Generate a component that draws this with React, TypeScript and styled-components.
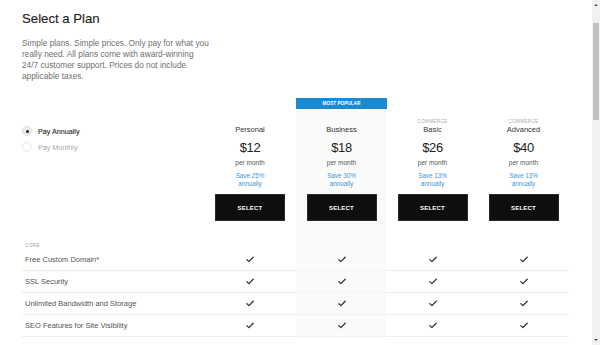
import React from "react";
import styled, { createGlobalStyle } from "styled-components";

const GlobalStyle = createGlobalStyle`
  html, body { margin: 0; padding: 0; background: #fff; overflow: hidden; }
  body { font-family: "Liberation Sans", Arial, sans-serif; -webkit-font-smoothing: antialiased; }
  * { box-sizing: border-box; }
`;

const COLUMNS = "182px 92px 91px 91px 91px";
const HIGHLIGHT = "#fafafa";

const Shell = styled.div`
  display: flex;
  width: 600px;
  height: 345px;
  overflow: hidden;
`;

const Page = styled.main`
  flex: 1;
  padding: 11px 0 0 22px;
  overflow: hidden;
`;

const Title = styled.h1`
  margin: 0;
  font-size: 13.2px;
  line-height: 16px;
  font-weight: 400;
  color: #1e1e1e;
  -webkit-text-stroke: 0.15px #1e1e1e;
`;

const Description = styled.p`
  margin: 11px 0 0;
  font-size: 8.3px;
  line-height: 11px;
  color: #707070;
`;

const Row = styled.div<{ $height?: number }>`
  display: grid;
  grid-template-columns: ${COLUMNS};
  height: ${(p) => (p.$height ? `${p.$height}px` : "auto")};
`;

const BannerRow = styled(Row)`
  margin-top: 16px;
  height: 11px;
`;

const Banner = styled.div`
  grid-column: 3;
  background: #1b8ad3;
  color: #fff;
  font-size: 4.7px;
  font-weight: 700;
  display: flex;
  align-items: center;
  justify-content: center;
`;

const Cell = styled.div<{ $highlight?: boolean; $line?: boolean }>`
  background: ${(p) => (p.$highlight ? HIGHLIGHT : "transparent")};
  border-bottom: ${(p) =>
    p.$line ? `1px solid ${p.$highlight ? "#f2f2f2" : "#eeeeee"}` : "none"};
  display: flex;
  align-items: center;
  justify-content: center;
`;

const RadioGroup = styled.div`
  padding-top: 14px;
  display: flex;
  flex-direction: column;
`;

const RadioOption = styled.label<{ $checked?: boolean }>`
  display: flex;
  align-items: center;
  height: 16px;
  gap: 6px;
  font-size: 7.2px;
  color: ${(p) => (p.$checked ? "#2a2a2a" : "#aaa")};
  -webkit-text-stroke: ${(p) => (p.$checked ? "0.12px #2a2a2a" : "0")};
`;

const RadioDot = styled.span<{ $checked?: boolean }>`
  width: 10px;
  height: 10px;
  border-radius: 50%;
  display: flex;
  align-items: center;
  justify-content: center;
  background: ${(p) => (p.$checked ? "#ebebeb" : "#fff")};
  border: 1px solid ${(p) => (p.$checked ? "#e2e2e2" : "#e8e8e8")};
  &::after {
    content: "";
    width: 3px;
    height: 3px;
    border-radius: 50%;
    background: ${(p) => (p.$checked ? "#222" : "transparent")};
  }
`;

const PlanCell = styled.div<{ $highlight?: boolean }>`
  background: ${(p) => (p.$highlight ? HIGHLIGHT : "transparent")};
  display: flex;
  flex-direction: column;
  align-items: center;
  padding: 9px 0 20px;
  text-align: center;
`;

const Tag = styled.div`
  height: 7px;
  line-height: 7px;
  font-size: 4.5px;
  letter-spacing: 0.4px;
  color: #aaa;
`;

const PlanName = styled.div`
  font-size: 7.5px;
  line-height: 9px;
  color: #333;
`;

const Price = styled.div`
  margin-top: 6px;
  font-size: 13px;
  line-height: 16px;
  letter-spacing: -0.4px;
  color: #222;
`;

const Per = styled.div`
  margin-top: 3px;
  font-size: 6.5px;
  line-height: 8px;
  color: #555;
`;

const Save = styled.div`
  margin-top: 5px;
  font-size: 6.3px;
  line-height: 8px;
  color: #3b99d8;
`;

const SelectButton = styled.button`
  margin-top: 6px;
  width: 70px;
  height: 27px;
  border: 1px solid #2a2a2a;
  background: #0e0e0e;
  color: #ffffff;
  font-family: inherit;
  font-size: 6px;
  font-weight: 700;
  letter-spacing: 0.2px;
  padding: 0;
  cursor: pointer;
`;

const SectionLabel = styled.div`
  padding-left: 3px;
  font-size: 4.5px;
  letter-spacing: 0.4px;
  color: #999;
  display: flex;
  align-items: center;
`;

const FeatureLabel = styled(Cell)`
  justify-content: flex-start;
  padding-left: 3px;
  font-size: 7.5px;
  color: #555;
`;

const Scrollbar = styled.div`
  width: 8px;
  height: 345px;
  background: #f1f1f1;
  display: flex;
  flex-direction: column;
  align-items: center;
`;

const Arrow = styled.div<{ $down?: boolean }>`
  height: 10px;
  display: flex;
  align-items: center;
  justify-content: center;
  &::after {
    content: "";
    border-left: 2.5px solid transparent;
    border-right: 2.5px solid transparent;
    ${(p) =>
      p.$down
        ? "border-top: 2.5px solid #505050;"
        : "border-bottom: 2.5px solid #505050;"}
  }
`;

const Thumb = styled.div`
  margin-top: 13px;
  width: 6px;
  height: 97px;
  background: #c1c1c1;
`;

const Spacer = styled.div`
  flex: 1;
`;

const Check = () => (
  <svg width="8" height="7" viewBox="0 0 8 7" fill="none">
    <polyline
      points="0.8,3.6 2.9,5.6 7.2,1.2"
      stroke="#333"
      strokeWidth="1.3"
      strokeLinecap="round"
      strokeLinejoin="round"
    />
  </svg>
);

const plans = [
  { tag: "", name: "Personal", price: "$12", save: "Save 25%" },
  { tag: "", name: "Business", price: "$18", save: "Save 30%", popular: true },
  { tag: "COMMERCE", name: "Basic", price: "$26", save: "Save 13%" },
  { tag: "COMMERCE", name: "Advanced", price: "$40", save: "Save 13%" },
];

const features = [
  "Free Custom Domain*",
  "SSL Security",
  "Unlimited Bandwidth and Storage",
  "SEO Features for Site Visibility",
];

export default function App() {
  return (
    <>
      <GlobalStyle />
      <Shell>
        <Page>
          <Title>Select a Plan</Title>
          <Description>
            Simple plans. Simple prices. Only pay for what you
            <br />
            really need. All plans come with award-winning
            <br />
            24/7 customer support. Prices do not include
            <br />
            applicable taxes.
          </Description>

          <BannerRow>
            <Banner>MOST POPULAR</Banner>
          </BannerRow>

          <Row>
            <RadioGroup>
              <RadioOption $checked>
                <RadioDot $checked />
                Pay Annually
              </RadioOption>
              <RadioOption>
                <RadioDot />
                Pay Monthly
              </RadioOption>
            </RadioGroup>
            {plans.map((p) => (
              <PlanCell key={p.name} $highlight={p.popular}>
                <Tag>{p.tag}</Tag>
                <PlanName>{p.name}</PlanName>
                <Price>{p.price}</Price>
                <Per>per month</Per>
                <Save>
                  {p.save}
                  <br />
                  annually
                </Save>
                <SelectButton>SELECT</SelectButton>
              </PlanCell>
            ))}
          </Row>

          <Row $height={8}>
            <SectionLabel>CORE</SectionLabel>
            <Cell />
            <Cell $highlight />
            <Cell />
            <Cell />
          </Row>

          {features.map((f) => (
            <Row key={f} $height={22}>
              <FeatureLabel $line>{f}</FeatureLabel>
              {plans.map((p) => (
                <Cell key={p.name} $line $highlight={p.popular}>
                  <Check />
                </Cell>
              ))}
            </Row>
          ))}
        </Page>
        <Scrollbar>
          <Arrow />
          <Thumb />
          <Spacer />
          <Arrow $down />
        </Scrollbar>
      </Shell>
    </>
  );
}
